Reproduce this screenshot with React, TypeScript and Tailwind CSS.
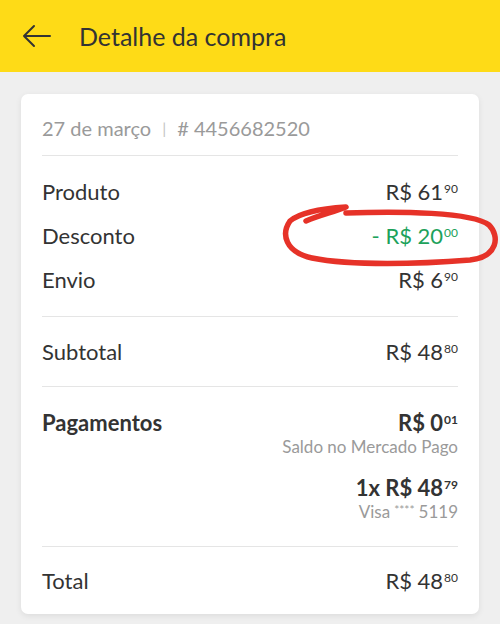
import React from "react";

const font = { fontFamily: "Lato, 'Open Sans', sans-serif" };

function Price({ main, cents, className = "", centsClass = "" }: { main: string; cents: string; className?: string; centsClass?: string }) {
  return (
    <span className={`inline-flex items-start ${className}`}>
      <span>{main}</span>
      <span className={`text-[12px] leading-none mt-[3px] ml-[1px] ${centsClass}`}>{cents}</span>
    </span>
  );
}

function Row({ label, children }: { label: string; children: React.ReactNode }) {
  return (
    <div className="flex items-center justify-between h-[24px] text-[22px] leading-[24px] text-[#333]">
      <span>{label}</span>
      {children}
    </div>
  );
}

export default function App() {
  return (
    <div className="w-[500px] h-[624px] bg-[#efefef] overflow-hidden relative" style={font}>
      <div className="h-[72px] bg-[#fedb17] flex items-center">
        <div className="w-[79px] flex items-center pl-[22px]">
          <svg width="29" height="24" viewBox="0 0 29 24" fill="none" stroke="#333" strokeWidth="2" strokeLinecap="round" strokeLinejoin="round">
            <path d="M28 12H2M12 2L2 12l10 10" />
          </svg>
        </div>
        <span className="text-[25px] text-[#333] leading-none">Detalhe da compra</span>
      </div>

      <div className="mx-[21px] mt-[22px] bg-white rounded-[7px] shadow-[0_2px_6px_rgba(0,0,0,0.08)] px-[21px]">
        <div className="pt-[23px] pb-[16px] text-[20px] leading-[22px] text-[#9a9a9a] flex items-center">
          <span>27 de março</span>
          <span className="mx-[11px] text-[#c4c4c4] text-[16px]">|</span>
          <span># 4456682520</span>
        </div>
        <div className="h-px bg-[#e5e5e5]" />

        <div className="pt-[24px] pb-[24px] flex flex-col gap-[20px]">
          <Row label="Produto">
            <Price main="R$ 61" cents="90" />
          </Row>
          <Row label="Desconto">
            <Price main="- R$ 20" cents="00" className="text-[#1da25b]" />
          </Row>
          <Row label="Envio">
            <Price main="R$ 6" cents="90" />
          </Row>
        </div>
        <div className="h-px bg-[#e5e5e5]" />

        <div className="pt-[23px] pb-[22px]">
          <Row label="Subtotal">
            <Price main="R$ 48" cents="80" />
          </Row>
        </div>
        <div className="h-px bg-[#e5e5e5]" />

        <div className="pt-[24px] pb-[22px] flex justify-between text-[#333]">
          <span className="text-[22px] leading-[24px] font-bold">Pagamentos</span>
          <div className="flex flex-col items-end">
            <Price main="R$ 0" cents="01" className="text-[22px] leading-[24px] font-bold" />
            <span className="text-[17px] leading-[24px] text-[#9a9a9a]">Saldo no Mercado Pago</span>
            <Price main="1x R$ 48" cents="79" className="text-[22px] leading-[24px] font-bold mt-[17px]" />
            <span className="text-[17px] leading-[24px] text-[#9a9a9a] inline-flex items-start">
              <span>Visa</span>
              <span className="text-[12px] leading-[20px] mx-[4px]">****</span>
              <span>5119</span>
            </span>
          </div>
        </div>
        <div className="h-px bg-[#e5e5e5]" />

        <div className="pt-[22px] pb-[21px]">
          <Row label="Total">
            <Price main="R$ 48" cents="80" />
          </Row>
        </div>
      </div>

      <svg className="absolute left-0 top-0 pointer-events-none" width="500" height="624" viewBox="0 0 500 624" fill="none">
        <path
          d="M306 221 C 320 215, 334 212, 346 207 C 330 208, 302 211, 290 221 C 281 234, 285 252, 312 258 C 352 266, 420 264, 470 260 C 498 257, 500 236, 489 225 C 472 212, 400 211, 346 213"
          stroke="#e63228"
          strokeWidth="5.5"
          strokeLinecap="round"
          strokeLinejoin="round"
        />
      </svg>
    </div>
  );
}
